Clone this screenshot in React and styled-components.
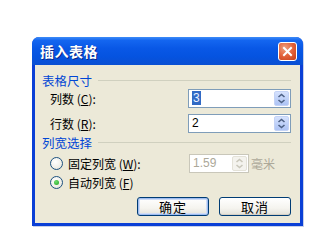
import React from "react";
import styled, { createGlobalStyle } from "styled-components";

const GlobalStyle = createGlobalStyle`
  body {
    margin: 0;
    background: #ffffff;
    font-family: "Noto Sans CJK SC", "Liberation Sans", sans-serif;
  }
`;

const Page = styled.div`
  width: 327px;
  height: 241px;
  padding: 37px 0 0 32px;
  box-sizing: border-box;
`;

const Window = styled.div`
  width: 271px;
  height: 189px;
  display: flex;
  flex-direction: column;
  background: #0a3fd6;
  border-radius: 7px 7px 0 0;
  padding: 0 3px 3px 3px;
  box-sizing: border-box;
  box-shadow: 1px 1px 0 #c8d0e8;
`;

const TitleBar = styled.div`
  height: 28px;
  margin: 0 -3px;
  padding: 0 6px 0 8px;
  display: flex;
  align-items: center;
  justify-content: space-between;
  border-radius: 7px 7px 0 0;
  background: linear-gradient(
    to bottom,
    #3d8cf7 0%,
    #1466f0 12%,
    #0958e6 40%,
    #0553e0 70%,
    #0a4fd2 100%
  );
`;

const Title = styled.span`
  color: #ffffff;
  font-size: 14px;
  font-weight: 700;
  letter-spacing: 0.5px;
  text-shadow: 1px 1px 0 #0b2a8a;
`;

const CloseButton = styled.div`
  width: 19px;
  height: 19px;
  border: 1px solid #ffffff;
  border-radius: 3px;
  background: radial-gradient(circle at 35% 30%, #f0a07e 0%, #e2613a 50%, #c33d18 100%);
  display: flex;
  align-items: center;
  justify-content: center;
  box-sizing: border-box;
`;

const Body = styled.div`
  flex: 1;
  background: #ece9d8;
  padding: 7px 9px 7px 7px;
  display: flex;
  flex-direction: column;
  font-size: 12px;
  color: #000000;
`;

const GroupHeader = styled.div`
  display: flex;
  align-items: center;
  gap: 6px;
  height: 16px;
  color: #0046d5;
  font-size: 12.5px;
  margin-top: ${(p) => p.$top || 0}px;
  &::after {
    content: "";
    flex: 1;
    height: 1px;
    background: #d0d0bf;
  }
`;

const FieldRow = styled.div`
  display: flex;
  align-items: center;
  justify-content: space-between;
  height: ${(p) => p.$h || 19}px;
  margin-top: ${(p) => p.$top || 0}px;
  padding-left: ${(p) => p.$indent || 8}px;
`;

const Label = styled.span`
  color: ${(p) => (p.$disabled ? "#aca899" : "#000000")};
  font-size: 12px;
  white-space: nowrap;
  u {
    text-decoration: underline;
  }
`;

const SpinBox = styled.div`
  width: ${(p) => p.$w}px;
  height: 19px;
  box-sizing: border-box;
  border: 1px solid ${(p) => (p.$disabled ? "#c9c7ba" : "#7f9db9")};
  background: #ffffff;
  display: flex;
  align-items: center;
  padding: 1px 1px 1px 3px;
  font-family: "Liberation Sans", sans-serif;
  font-size: 12px;
  color: ${(p) => (p.$disabled ? "#aca899" : "#000000")};
`;

const Value = styled.span`
  flex: 1;
  line-height: 15px;
`;

const Selected = styled.span`
  background: #316ac5;
  color: #e8f0ff;
  padding: 0 1px;
`;

const SpinButton = styled.div`
  width: 15px;
  height: 15px;
  border-radius: 2px;
  box-sizing: border-box;
  border: 1px solid ${(p) => (p.$disabled ? "#e4e2d8" : "#c4d3f6")};
  background: ${(p) =>
    p.$disabled
      ? "#f4f3ee"
      : "linear-gradient(to bottom, #d6e2fd 0%, #bccff8 60%, #aec4f5 100%)"};
  display: flex;
  align-items: center;
  justify-content: center;
`;

const RadioRow = styled.div`
  display: flex;
  align-items: center;
  gap: 5px;
`;

const Radio = styled.span`
  width: 11px;
  height: 11px;
  border-radius: 50%;
  border: 1px solid #1c5180;
  background: radial-gradient(circle at 40% 35%, #ffffff 0%, #f0efe8 60%, #d8d5c8 100%);
  display: flex;
  align-items: center;
  justify-content: center;
  &::after {
    content: "";
    width: 5px;
    height: 5px;
    border-radius: 50%;
    background: ${(p) => (p.$checked ? "radial-gradient(circle at 40% 35%, #6ee06e, #21a121)" : "transparent")};
  }
`;

const Unit = styled.div`
  display: flex;
  align-items: center;
  gap: 2px;
`;

const Buttons = styled.div`
  display: flex;
  justify-content: flex-end;
  gap: 10px;
  margin-top: auto;
`;

const Button = styled.div`
  width: 72px;
  height: 19px;
  box-sizing: border-box;
  border: 1px solid #003c74;
  border-radius: 3px;
  background: linear-gradient(to bottom, #ffffff 0%, #f5f4ef 60%, #e3e1d8 100%);
  box-shadow: ${(p) =>
    p.$default
      ? "inset 0 0 0 1px #9ebcf0, inset 0 0 0 2px #cfdcf6"
      : "inset 0 -1px 0 #d6d0c5"};
  display: flex;
  align-items: center;
  justify-content: center;
  font-size: 13px;
  letter-spacing: 1px;
`;

const Arrows = ({ color }) => (
  <svg width="9" height="11" viewBox="0 0 9 11">
    <path d="M1.5 4 L4.5 1.5 L7.5 4" fill="none" stroke={color} strokeWidth="1.6" />
    <path d="M1.5 7 L4.5 9.5 L7.5 7" fill="none" stroke={color} strokeWidth="1.6" />
  </svg>
);

const CloseIcon = () => (
  <svg width="11" height="11" viewBox="0 0 11 11">
    <path d="M2 2 L9 9 M9 2 L2 9" stroke="#ffffff" strokeWidth="2" strokeLinecap="square" />
  </svg>
);

export default function App() {
  return (
    <>
      <GlobalStyle />
      <Page>
        <Window>
          <TitleBar>
            <Title>插入表格</Title>
            <CloseButton>
              <CloseIcon />
            </CloseButton>
          </TitleBar>
          <Body>
            <GroupHeader>表格尺寸</GroupHeader>
            <FieldRow $top={1}>
              <Label>
                列数 (<u>C</u>):
              </Label>
              <SpinBox $w={103}>
                <Value>
                  <Selected>3</Selected>
                </Value>
                <SpinButton>
                  <Arrows color="#4d6185" />
                </SpinButton>
              </SpinBox>
            </FieldRow>
            <FieldRow $top={6}>
              <Label>
                行数 (<u>R</u>):
              </Label>
              <SpinBox $w={103}>
                <Value>2</Value>
                <SpinButton>
                  <Arrows color="#4d6185" />
                </SpinButton>
              </SpinBox>
            </FieldRow>
            <GroupHeader $top={1}>列宽选择</GroupHeader>
            <FieldRow $top={4} $indent={8}>
              <RadioRow>
                <Radio />
                <Label>
                  固定列宽 (<u>W</u>):
                </Label>
              </RadioRow>
              <Unit>
                <SpinBox $w={60} $disabled>
                  <Value>1.59</Value>
                  <SpinButton $disabled>
                    <Arrows color="#c9c7ba" />
                  </SpinButton>
                </SpinBox>
                <Label $disabled style={{ width: 40 }}>
                  毫米
                </Label>
              </Unit>
            </FieldRow>
            <FieldRow $top={0} $h={18} $indent={8}>
              <RadioRow>
                <Radio $checked />
                <Label>
                  自动列宽 (<u>F</u>)
                </Label>
              </RadioRow>
            </FieldRow>
            <Buttons>
              <Button $default>确定</Button>
              <Button>取消</Button>
            </Buttons>
          </Body>
        </Window>
      </Page>
    </>
  );
}
